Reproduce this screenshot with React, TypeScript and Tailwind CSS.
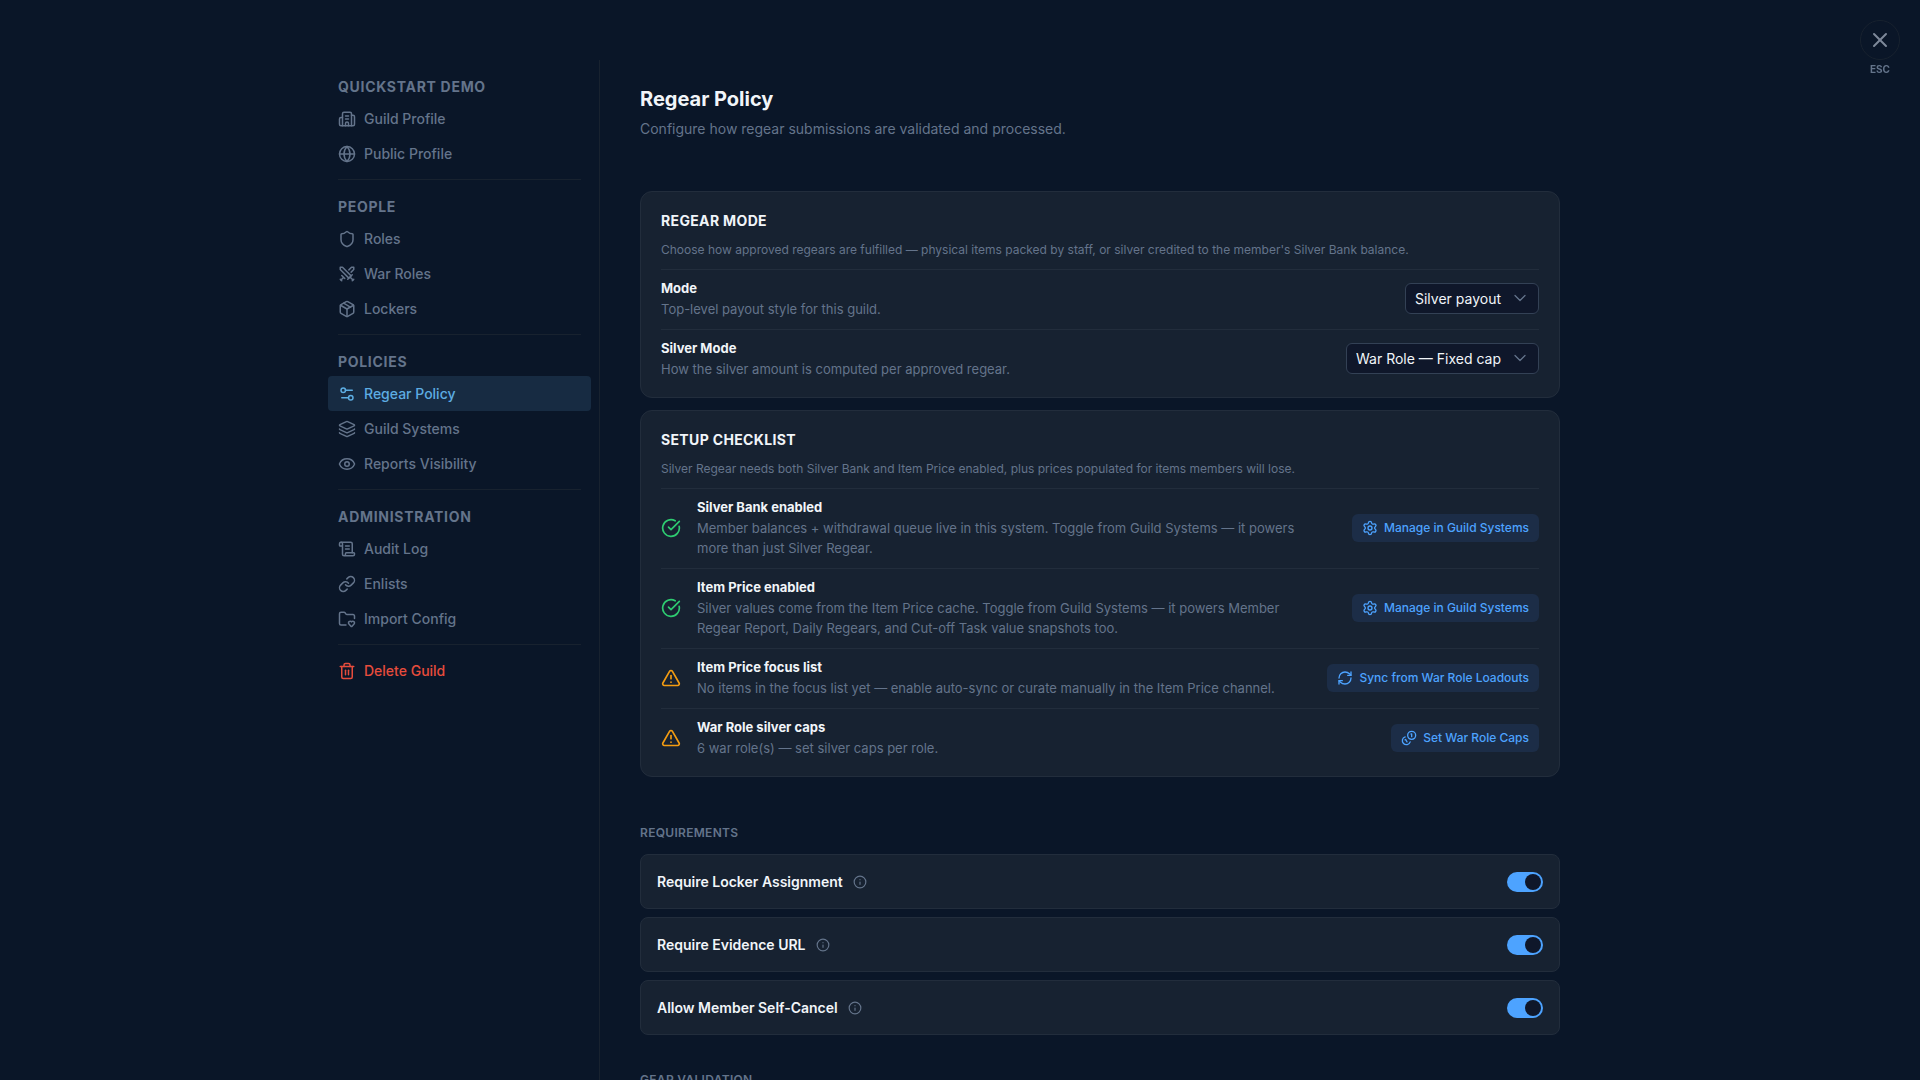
import { useState } from 'react'
import type { ComponentType, ReactNode } from 'react'
import {
  Building2,
  ChevronDown,
  CircleCheckBig,
  Eye,
  FolderHeart,
  Globe,
  Info,
  Layers,
  Link,
  Package,
  RefreshCw,
  ScrollText,
  Settings,
  Settings2,
  Shield,
  Swords,
  Trash2,
  TriangleAlert,
  X,
} from 'lucide-react'

type IconType = ComponentType<{ size?: number; strokeWidth?: number }>

// Two overlapping coins, the front one at the top right
function CoinsIcon({ size = 24 }: { size?: number }) {
  return (
    <svg
      width={size}
      height={size}
      viewBox="0 0 24 24"
      fill="none"
      stroke="currentColor"
      strokeWidth={2}
      strokeLinecap="round"
      strokeLinejoin="round"
      aria-hidden="true"
    >
      <path d="M13.744 17.736a6 6 0 1 1-7.48-7.48" />
      <path d="M15 6h1v4" />
      <path d="m6.134 14.768.866-.5 2 3.464" />
      <circle cx="16" cy="8" r="6" />
    </svg>
  )
}

const navGroups: { title: string; items: { label: string; icon: IconType }[] }[] = [
  {
    title: 'Quickstart Demo',
    items: [
      { label: 'Guild Profile', icon: Building2 },
      { label: 'Public Profile', icon: Globe },
    ],
  },
  {
    title: 'People',
    items: [
      { label: 'Roles', icon: Shield },
      { label: 'War Roles', icon: Swords },
      { label: 'Lockers', icon: Package },
    ],
  },
  {
    title: 'Policies',
    items: [
      { label: 'Regear Policy', icon: Settings2 },
      { label: 'Guild Systems', icon: Layers },
      { label: 'Reports Visibility', icon: Eye },
    ],
  },
  {
    title: 'Administration',
    items: [
      { label: 'Audit Log', icon: ScrollText },
      { label: 'Enlists', icon: Link },
      { label: 'Import Config', icon: FolderHeart },
    ],
  },
]

const checklist: { title: string; text: string; done: boolean; action: string; icon: IconType }[] = [
  {
    title: 'Silver Bank enabled',
    text: 'Member balances + withdrawal queue live in this system. Toggle from Guild Systems — it powers more than just Silver Regear.',
    done: true,
    action: 'Manage in Guild Systems',
    icon: Settings,
  },
  {
    title: 'Item Price enabled',
    text: 'Silver values come from the Item Price cache. Toggle from Guild Systems — it powers Member Regear Report, Daily Regears, and Cut-off Task value snapshots too.',
    done: true,
    action: 'Manage in Guild Systems',
    icon: Settings,
  },
  {
    title: 'Item Price focus list',
    text: 'No items in the focus list yet — enable auto-sync or curate manually in the Item Price channel.',
    done: false,
    action: 'Sync from War Role Loadouts',
    icon: RefreshCw,
  },
  {
    title: 'War Role silver caps',
    text: '6 war role(s) — set silver caps per role.',
    done: false,
    action: 'Set War Role Caps',
    icon: CoinsIcon,
  },
]

function Sidebar() {
  const [active, setActive] = useState('Regear Policy')

  return (
    <nav className="w-[280px] shrink-0 border-r border-[#18222f] p-2">
      {navGroups.map((group) => (
        <div key={group.title}>
          <h2 className="px-2.5 pt-2 pb-1 text-sm leading-[21px] font-bold tracking-wider text-[#64748b] uppercase">
            {group.title}
          </h2>
          {group.items.map(({ label, icon: Icon }) => (
            <button
              key={label}
              type="button"
              onClick={() => setActive(label)}
              className={`flex h-[35px] w-full items-center gap-2 rounded px-2.5 text-left text-sm font-medium ${
                active === label ? 'bg-[#172b42] text-[#5dade2]' : 'text-[#64748b]'
              }`}
            >
              <Icon size={18} strokeWidth={2} />
              {label}
            </button>
          ))}
          <hr className="mx-2.5 my-2 border-[#18222f]" />
        </div>
      ))}
      <button
        type="button"
        className="flex h-[35px] w-full items-center gap-2 rounded px-2.5 text-left text-sm font-medium text-[#e74c3c]"
      >
        <Trash2 size={18} strokeWidth={2} />
        Delete Guild
      </button>
    </nav>
  )
}

interface SectionCardProps {
  title: string
  description: string
  children: ReactNode
}

function SectionCard({ title, description, children }: SectionCardProps) {
  return (
    <section className="rounded-xl border border-[#222d3c] bg-[#172231] px-5 pt-[18px] pb-2">
      <h2 className="text-sm leading-[21px] font-bold tracking-wide text-[#f1f5f9] uppercase">{title}</h2>
      <p className="my-2.5 text-xs leading-[18px] text-[#64748b]">{description}</p>
      {children}
    </section>
  )
}

interface SelectRowProps {
  id: string
  label: string
  text: string
  options: string[]
}

function SelectRow({ id, label, text, options }: SelectRowProps) {
  return (
    <div className="flex items-center justify-between gap-5 border-t border-[#222d3c] pt-2 pb-2.5">
      <div>
        <label htmlFor={id} className="block text-[13px] leading-5 font-bold text-[#f1f5f9]">
          {label}
        </label>
        <p className="mt-px text-[13px] leading-5 text-[#64748b]">{text}</p>
      </div>
      <div className="relative">
        <select
          id={id}
          className="block h-[31px] appearance-none rounded-md border border-[#334155] bg-[#0f172a] pr-9 pl-[9px] text-sm text-[#f1f5f9]"
        >
          {options.map((option) => (
            <option key={option}>{option}</option>
          ))}
        </select>
        <ChevronDown
          size={20}
          strokeWidth={1.5}
          className="pointer-events-none absolute top-[5px] right-[9px] text-[#64748b]"
        />
      </div>
    </div>
  )
}

function ToggleRow({ id, label }: { id: string; label: string }) {
  const [checked, setChecked] = useState(true)

  return (
    <div className="flex h-[55px] items-center justify-between rounded-lg border border-[#222d3c] bg-[#172231] px-4">
      <div className="flex items-center gap-2.5">
        <label htmlFor={id} className="text-sm font-semibold text-[#f1f5f9]">
          {label}
        </label>
        <Info size={14} className="text-[#64748b]" />
      </div>
      <input
        id={id}
        type="checkbox"
        role="switch"
        checked={checked}
        onChange={(e) => setChecked(e.target.checked)}
        className="flex h-5 w-9 appearance-none items-center rounded-full bg-[#334155] px-0.5 before:size-4 before:rounded-full before:bg-[#0f172a] checked:justify-end checked:bg-[#4da3ff]"
      />
    </div>
  )
}

export default function App() {
  return (
    <div className="h-screen overflow-hidden bg-[#0a1628] font-['Inter',sans-serif] text-[#f1f5f9]">
      <div className="mx-auto flex h-full max-w-[1280px] pt-[60px]">
        <Sidebar />

        <main className="min-w-0 flex-1 overflow-hidden px-10 pt-6">
          <h1 className="text-xl leading-[30px] font-bold">Regear Policy</h1>
          <p className="mt-1 text-sm leading-[21px] text-[#64748b]">
            Configure how regear submissions are validated and processed.
          </p>

          <div className="mt-[52px] flex flex-col gap-3">
            <SectionCard
              title="Regear Mode"
              description="Choose how approved regears are fulfilled — physical items packed by staff, or silver credited to the member's Silver Bank balance."
            >
              <SelectRow
                id="mode"
                label="Mode"
                text="Top-level payout style for this guild."
                options={['Silver payout']}
              />
              <SelectRow
                id="silver-mode"
                label="Silver Mode"
                text="How the silver amount is computed per approved regear."
                options={['War Role — Fixed cap']}
              />
            </SectionCard>

            <SectionCard
              title="Setup Checklist"
              description="Silver Regear needs both Silver Bank and Item Price enabled, plus prices populated for items members will lose."
            >
              {checklist.map(({ title, text, done, action, icon: Icon }) => (
                <div key={title} className="flex items-center gap-4 border-t border-[#222d3c] pt-2 pb-2.5">
                  {done ? (
                    <CircleCheckBig size={20} className="shrink-0 text-[#2ecc71]" />
                  ) : (
                    <TriangleAlert size={20} className="shrink-0 text-[#f39c12]" />
                  )}
                  <div className="min-w-0 flex-1">
                    <h3 className="text-[13px] leading-5 font-bold text-[#f1f5f9]">{title}</h3>
                    <p className="mt-px max-w-[620px] text-[13px] leading-5 text-[#64748b]">{text}</p>
                  </div>
                  <button
                    type="button"
                    className="flex h-7 shrink-0 items-center gap-1.5 rounded-md bg-[#1c2d47] px-2.5 text-xs font-medium text-[#4da3ff]"
                  >
                    <Icon size={16} />
                    {action}
                  </button>
                </div>
              ))}
            </SectionCard>
          </div>

          <h2 className="mt-[47px] mb-3 text-xs leading-[18px] font-semibold tracking-wide text-[#64748b] uppercase">
            Requirements
          </h2>
          <div className="flex flex-col gap-2">
            <ToggleRow id="locker" label="Require Locker Assignment" />
            <ToggleRow id="evidence" label="Require Evidence URL" />
            <ToggleRow id="self-cancel" label="Allow Member Self-Cancel" />
          </div>

          <h2 className="mt-9 mb-3 text-xs leading-[18px] font-semibold tracking-wide text-[#64748b] uppercase">
            Gear Validation
          </h2>
        </main>
      </div>

      {/* Close button, pinned over the page corner */}
      <div className="fixed top-5 right-5 flex flex-col items-center gap-0.5">
        <button
          type="button"
          aria-label="Close"
          className="flex size-10 items-center justify-center rounded-full border border-[#18222f] text-[#7d8899]"
        >
          <X size={24} strokeWidth={2} />
        </button>
        <span className="text-[10px] leading-[14px] font-bold text-[#64748b]">ESC</span>
      </div>
    </div>
  )
}
